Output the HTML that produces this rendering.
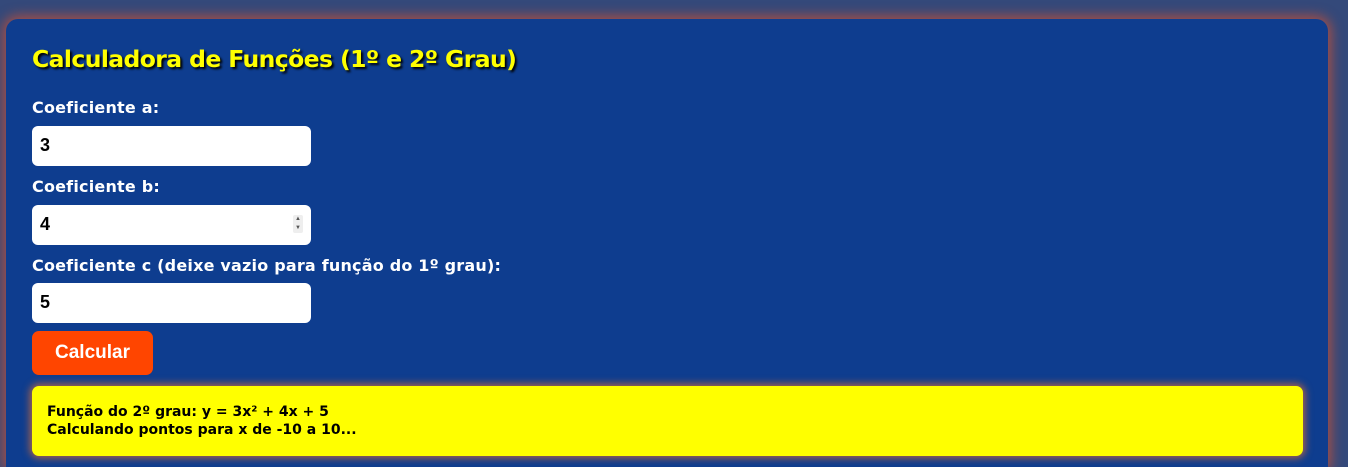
<!DOCTYPE html>
<html><head><meta charset="utf-8"><style>
html,body{margin:0;padding:0;width:1348px;height:467px;overflow:hidden;background:#34497a;}
.card{position:absolute;left:6px;top:19px;width:1322px;height:448px;background:#0e3d8f;border-radius:12px 12px 0 0;box-shadow:0 0 12px 3px rgba(210,80,50,.75);}
.t{position:absolute;left:26px;top:26px;font:bold 23.5px "DejaVu Sans",sans-serif;color:#ffff00;text-shadow:2px 2px 2px #000;letter-spacing:-0.6px;margin:0;white-space:nowrap}
.l{position:absolute;left:26px;font:bold 16px "DejaVu Sans",sans-serif;color:#fff;letter-spacing:0.2px;white-space:nowrap}
.i{position:absolute;left:26px;width:279px;height:40px;background:#fff;border-radius:6px;font:bold 18px "Liberation Sans",sans-serif;color:#000;box-sizing:border-box;padding:9px 8px;}
.sp{position:absolute;right:8px;top:10px;width:10px;height:18px;background:#eee;border-radius:2px;font-size:6px;line-height:9px;text-align:center;color:#555}
.b{position:absolute;left:26px;top:312px;width:121px;height:44px;background:#ff4500;border-radius:7px;color:#fff;font:bold 19px "Liberation Sans",sans-serif;text-align:center;line-height:44px}
.r{position:absolute;left:26px;top:367px;width:1271px;height:70px;background:#ffff00;border-radius:7px;box-shadow:0 0 8px 2px rgba(220,110,50,.8);font:bold 14px/18px "DejaVu Sans",sans-serif;color:#000;box-sizing:border-box;padding:17px 15px;letter-spacing:0}
</style></head><body>
<div class="card">
<div class="t">Calculadora de Funções (1º e 2º Grau)</div>
<div class="l" style="top:79px">Coeficiente a:</div>
<div class="i" style="top:107px">3</div>
<div class="l" style="top:158px">Coeficiente b:</div>
<div class="i" style="top:186px">4<div class="sp">▲<br>▼</div></div>
<div class="l" style="top:237px">Coeficiente c (deixe vazio para função do 1º grau):</div>
<div class="i" style="top:264px">5</div>
<div class="b">Calcular</div>
<div class="r">Função do 2º grau: y = 3x² + 4x + 5<br>Calculando pontos para x de -10 a 10...</div>
</div>
</body></html>
